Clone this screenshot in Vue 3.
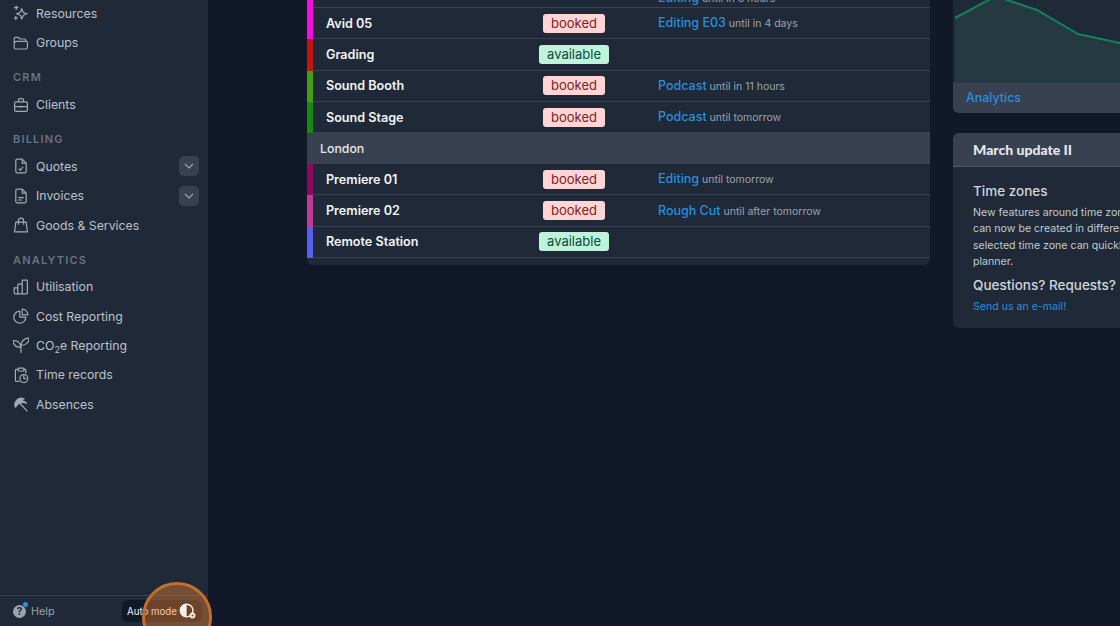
<script setup>
const groups = [
  { items: [
    { name: 'Resources', icon: 'sparkles' },
    { name: 'Groups', icon: 'folder' }
  ] },
  { label: 'CRM', items: [{ name: 'Clients', icon: 'briefcase' }] },
  { label: 'Billing', items: [
    { name: 'Quotes', icon: 'docCheck', more: true },
    { name: 'Invoices', icon: 'docText', more: true },
    { name: 'Goods & Services', icon: 'bag' }
  ] },
  { label: 'Analytics', items: [
    { name: 'Utilisation', icon: 'bars' },
    { name: 'Cost Reporting', icon: 'pie' },
    { name: 'CO2e Reporting', icon: 'leaf', sub: true },
    { name: 'Time records', icon: 'clip' },
    { name: 'Absences', icon: 'umbrella' }
  ] }
]

const icons = {
  sparkles: 'M11 4.500l1.800 4.700 4.700 1.800-4.700 1.800L11 17.500l-1.800-4.700L4.500 11l4.700-1.800zM4 1v4.500M1.800 3.200h4.500M3.500 14.500v3.500M1.800 16.200h3.500',
  folder: 'M1.500 15.500V4.500A1.500 1.500 0 0 1 3 3h3.800l1.800 2h5.900A1.500 1.500 0 0 1 16 6.500V8M5 8h11.500A1.500 1.500 0 0 1 18 9.500v6.500a1.500 1.500 0 0 1-1.500 1.500H3A1.500 1.500 0 0 1 1.500 16v-5A3 3 0 0 1 5 8z',
  briefcase: 'M3.500 6h13A1.500 1.500 0 0 1 18 7.500v8.500a2 2 0 0 1-2 2H4a2 2 0 0 1-2-2V7.500A1.500 1.500 0 0 1 3.500 6zM7 6V3.500A1.500 1.500 0 0 1 8.500 2h3A1.500 1.500 0 0 1 13 3.500V6M2 12h16M10 11.500v1.500',
  docCheck: 'M5 1.500h6.500l5 5v10.500a1.500 1.500 0 0 1-1.500 1.500H5A1.500 1.500 0 0 1 3.500 17V3A1.500 1.500 0 0 1 5 1.500zM11.500 1.500v5h5M7.500 13.500l1.800 1.800 3-3.800',
  docText: 'M5 1.500h6.500l5 5v10.500a1.500 1.500 0 0 1-1.500 1.500H5A1.500 1.500 0 0 1 3.500 17V3A1.500 1.500 0 0 1 5 1.500zM11.500 1.500v5h5M7 12h6M7 15h4',
  bag: 'M3.500 6.500h13L18 18.500H2zM6.800 9V4.500a3.200 3.200 0 0 1 6.400 0V9',
  bars: 'M1.500 11H6v7.500H2.500a1 1 0 0 1-1-1zM6 18.500V7.500a1 1 0 0 1 1-1h3.500a1 1 0 0 1 1 1v11zM11.500 18.500V2.500a1 1 0 0 1 1-1H17a1 1 0 0 1 1 1V17.500a1 1 0 0 1-1 1z',
  pie: 'M8.500 4a7.500 7.500 0 1 0 7.500 7.500H8.500zM11.500 1.500a7 7 0 0 1 7 7h-7z',
  leaf: 'M10 19.500V10M10 13C5.500 13 .5 11 0 4.500 4.500 4 9.500 6 10 13zM10 10.500C10 5.500 14 1.500 20 1c.3 6-4 9.500-10 9.500z',
  clip: 'M6.500 3H4A1 1 0 0 0 3 4v13a1 1 0 0 0 1 1h3.500M13.500 3H15a1 1 0 0 1 1 1v3.500M6.500 1.500h7v3.500h-7zM13.500 9.500a5 5 0 1 0 0 10 5 5 0 0 0 0-10zM13.500 11.500v3h2.500',
  umbrella: 'M3 14C.5 7.500 6.500 .5 14 3.500c-1.500.5-2.500 1.500-3 2.500 1.500 0 4 .5 6 3-4-1.500-10-1-14 5zM9.500 10l8 8.500'
}

const filled = ['umbrella']

const rows = [
  { name: 'Avid 04', color: '#f30ee0', status: 'booked', job: 'Editing', until: 'until in 3 hours', tall: true },
  { name: 'Avid 05', color: '#f30ee0', status: 'booked', job: 'Editing E03', until: 'until in 4 days' },
  { name: 'Grading', color: '#c1160c', status: 'available' },
  { name: 'Sound Booth', color: '#449f10', status: 'booked', job: 'Podcast', until: 'until in 11 hours' },
  { name: 'Sound Stage', color: '#178a12', status: 'booked', job: 'Podcast', until: 'until tomorrow' },
  { place: 'London' },
  { name: 'Premiere 01', color: '#8b0a60', status: 'booked', job: 'Editing', until: 'until tomorrow' },
  { name: 'Premiere 02', color: '#bf3a98', status: 'booked', job: 'Rough Cut', until: 'until after tomorrow' },
  { name: 'Remote Station', color: '#5661f0', status: 'available' }
]
</script>

<template>
  <div class="page">
    <aside class="sidebar">
      <nav class="nav">
        <div v-for="(group, i) in groups" :key="i" class="group">
          <div v-if="group.label" class="group-label">{{ group.label }}</div>
          <div v-for="item in group.items" :key="item.name" class="nav-item">
            <svg class="nav-icon" :class="{ solid: filled.includes(item.icon) }" viewBox="0 0 20 20"><path :d="icons[item.icon]" /></svg>
            <span v-if="item.sub">CO<sub>2</sub>e Reporting</span>
            <span v-else>{{ item.name }}</span>
            <button v-if="item.more" class="more">
              <svg viewBox="0 0 12 12"><path d="M2 4l4 4 4-4" /></svg>
            </button>
          </div>
        </div>
      </nav>
      <div class="side-foot">
        <div class="help">
          <span class="help-icon">?<i></i></span>
          Help
        </div>
        <div class="mode">
          Auto mode
          <svg viewBox="0 0 20 20" class="mode-icon">
            <circle cx="8.500" cy="9.500" r="7" fill="none" stroke="#f3efe9" stroke-width="1.600" />
            <path d="M8.500 2a7.500 7.500 0 0 0 0 15z" fill="#f3efe9" />
            <circle cx="15" cy="15" r="3.200" fill="#f3efe9" />
            <circle cx="15" cy="15" r="1.200" fill="#7a5236" />
          </svg>
        </div>
      </div>
    </aside>

    <main class="main">
      <section class="table">
        <template v-for="row in rows" :key="row.name || row.place">
          <div v-if="row.place" class="place">{{ row.place }}</div>
          <div v-else class="row" :class="{ tall: row.tall }">
            <span class="strip" :style="{ background: row.color }"></span>
            <span class="name">{{ row.name }}</span>
            <span class="status"><b :class="row.status">{{ row.status }}</b></span>
            <span class="job"><a v-if="row.job">{{ row.job }}</a> {{ row.until }}</span>
          </div>
        </template>
      </section>

      <section class="side-col">
        <div class="chart-card">
          <svg class="chart" viewBox="0 0 300 105" preserveAspectRatio="none">
            <path d="M2 42L43 20 54 24 84 34 125 58 167 67 300 84V105H2z" fill="#243a40" />
            <path d="M2 42L43 20 54 24 84 34 125 58 167 67 300 84" fill="none" stroke="#10835c" stroke-width="2" />
          </svg>
          <div class="chart-foot">Analytics</div>
        </div>
        <div class="news">
          <h2>March update II</h2>
          <div class="news-body">
            <h3>Time zones</h3>
            <p>New features around time zones:<br>can now be created in different<br>selected time zone can quickly<br>planner.</p>
            <h3 class="ask">Questions? Requests?</h3>
            <a>Send us an e-mail!</a>
          </div>
        </div>
      </section>
    </main>

    <div class="spot"></div>
  </div>
</template>

<style scoped>
.page {
  position: relative;
  display: flex;
  width: 1120px;
  height: 626px;
  overflow: hidden;
  background: #111827;
  font-family: Inter, "Open Sans", sans-serif;
}

.sidebar {
  display: flex;
  flex-direction: column;
  justify-content: space-between;
  flex: 0 0 208px;
  height: 626px;
  background: #1f2937;
  overflow: hidden;
}

.nav {
  margin-top: -1.300px;
}

.group-label {
  height: 14px;
  margin: 13px 0 5.500px 13px;
  font-size: 11px;
  line-height: 14px;
  font-weight: 600;
  letter-spacing: 1.200px;
  text-transform: uppercase;
  color: #6b7280;
}

.nav-item {
  display: flex;
  align-items: center;
  height: 29.330px;
  padding-left: 13px;
  font-size: 12.300px;
  color: #bcc2cc;
}

.nav-item sub {
  font-size: 9px;
  line-height: 0;
}

.nav-icon {
  flex: 0 0 16px;
  width: 16px;
  height: 16px;
  margin-right: 7px;
  fill: none;
  stroke: #a3a9b3;
  stroke-width: 1.500;
  stroke-linecap: round;
  stroke-linejoin: round;
}

.nav-icon.solid {
  fill: #a3a9b3;
}

.more {
  display: flex;
  align-items: center;
  justify-content: center;
  width: 20px;
  height: 20px;
  margin-left: auto;
  margin-right: 9px;
  padding: 0;
  border: none;
  border-radius: 5px;
  background: #374151;
}

.more svg {
  width: 12px;
  height: 12px;
  fill: none;
  stroke: #9ca3af;
  stroke-width: 1.200;
}

.side-foot {
  display: flex;
  align-items: center;
  justify-content: space-between;
  height: 30px;
  padding: 0 6px 0 13px;
  border-top: 1px solid #374151;
}

.help {
  display: flex;
  align-items: center;
  gap: 5px;
  font-size: 10.800px;
  color: #9ca3af;
}

.help-icon {
  position: relative;
  width: 13px;
  height: 13px;
  border-radius: 50%;
  background: #9ca3af;
  color: #1f2937;
  font-size: 10px;
  font-weight: 700;
  line-height: 13px;
  text-align: center;
}

.help-icon i {
  position: absolute;
  top: -3px;
  right: -2px;
  width: 5px;
  height: 5px;
  border-radius: 50%;
  background: #2b8fdc;
}

.mode {
  display: flex;
  align-items: center;
  justify-content: space-between;
  width: 80px;
  height: 22px;
  padding: 0 5px 0 5px;
  box-sizing: border-box;
  border-radius: 6px;
  background: #111827;
  color: #f3f4f6;
  font-size: 9.700px;
  white-space: nowrap;
}

.mode-icon {
  width: 18px;
  height: 18px;
  position: relative;
  z-index: 2;
}

.main {
  display: flex;
  align-items: flex-start;
  gap: 23px;
  padding-left: 99px;
}

.table {
  flex: 0 0 623px;
  margin-top: -46px;
  padding-bottom: 7px;
  background: #1f2937;
  border-radius: 0 0 6px 6px;
}

.row {
  display: grid;
  grid-template-columns: 6px 197px 128px 1fr;
  align-items: center;
  height: 31.300px;
  box-sizing: border-box;
  border-bottom: 1px solid #374151;
}

.row.tall {
  height: 54px;
}

.row.tall .job {
  align-self: end;
}

.strip {
  align-self: stretch;
  margin-bottom: -1px;
}

.name {
  padding-left: 13px;
  font-size: 12.600px;
  font-weight: 600;
  color: #f3f4f6;
}

.status {
  display: flex;
  justify-content: center;
}

.status b {
  padding: 0 8px;
  height: 19px;
  border-radius: 3px;
  font-size: 13px;
  font-weight: 400;
  line-height: 19px;
}

.booked {
  background: #fdd5d5;
  color: #7f1d1d;
}

.available {
  background: #bff3dc;
  color: #064e3b;
}

.job {
  padding-left: 20px;
  font-size: 10.500px;
  line-height: 17px;
  color: #9ca3af;
}

.job a {
  font-size: 12.500px;
  font-weight: 500;
  color: #2b8fdc;
}

.place {
  display: flex;
  align-items: center;
  height: 31px;
  padding-left: 13px;
  background: #374151;
  font-size: 12.300px;
  font-weight: 500;
  color: #e5e7eb;
}

.side-col {
  flex: 0 0 300px;
  margin-top: -24px;
}

.chart-card {
  border-radius: 0 0 6px 6px;
  overflow: hidden;
  background: #1f2937;
}

.chart {
  display: block;
  width: 300px;
  height: 105px;
}

.chart-foot {
  display: flex;
  align-items: center;
  height: 32px;
  padding-left: 13px;
  padding-bottom: 1px;
  box-sizing: border-box;
  border-top: 2px solid #2b3543;
  background: #374151;
  font-size: 12.400px;
  font-weight: 500;
  color: #2b8fdc;
}

.news {
  margin-top: 20px;
  border-radius: 6px;
  overflow: hidden;
  background: #1f2937;
}

.news h2 {
  height: 34px;
  margin: 0;
  padding-left: 20px;
  box-sizing: border-box;
  border-bottom: 1px solid #4b5563;
  background: #374151;
  font-family: Lato, sans-serif;
  font-size: 14px;
  font-weight: 900;
  line-height: 33px;
  color: #e5e7eb;
}

.news-body {
  padding: 14px 20px 13px;
  font-size: 10.600px;
  color: #c4c9d1;
}

.news-body h3 {
  margin: 0;
  font-size: 13.500px;
  font-weight: 500;
  line-height: 20px;
  color: #d1d5db;
}

.news-body p {
  margin: 4px 0 0;
  line-height: 16.300px;
  white-space: nowrap;
}

.news-body .ask {
  margin-top: 5px;
}

.news-body a {
  display: block;
  margin-top: 4px;
  font-size: 10.600px;
  line-height: 16px;
  color: #2b8fdc;
}

.spot {
  position: absolute;
  left: 142px;
  top: 582px;
  width: 70px;
  height: 70px;
  box-sizing: border-box;
  border: 3px solid #c2702c;
  border-radius: 50%;
  background: rgba(234, 130, 50, 0.42);
}
</style>

<style>
html, body {
  overflow: hidden;
  background: #111827;
}
</style>
